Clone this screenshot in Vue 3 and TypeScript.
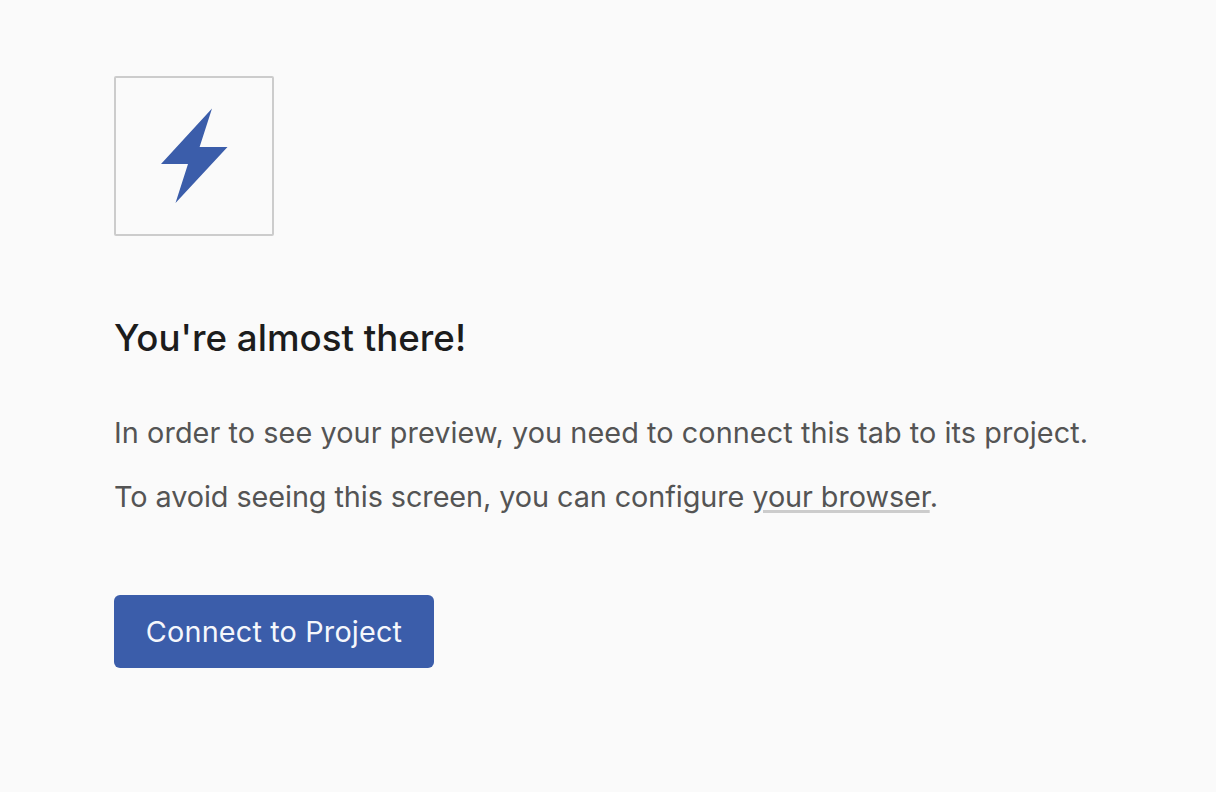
<script setup lang="ts">
const title: string = "You're almost there!";
</script>

<template>
  <main class="page">
    <div class="logo">
      <svg width="156" height="156" viewBox="0 0 156 156" aria-hidden="true">
        <path d="M96 30.5 L83.6 69 H111.5 L59.5 125 L72 86 H45 Z" fill="#3b5daa" />
      </svg>
    </div>
    <h1 class="title">{{ title }}</h1>
    <p class="text first">In order to see your preview, you need to connect this tab to its project.</p>
    <p class="text second">To avoid seeing this screen, you can configure <a class="link" href="#">your browser</a>.</p>
    <button class="cta" type="button">Connect to Project</button>
  </main>
</template>

<style>
html, body { margin: 0; background: #fafafa; }
</style>

<style scoped>
.page {
  box-sizing: border-box;
  min-height: 792px;
  padding: 76px 0 0 114px;
  display: flex;
  flex-direction: column;
  align-items: flex-start;
  font-family: Inter, "Liberation Sans", sans-serif;
  background: #fafafa;
}
.logo {
  width: 160px;
  height: 160px;
  box-sizing: border-box;
  border: 2px solid #cccccc;
  border-radius: 2px;
  display: block;
}
.logo svg { display: block; }
.title {
  margin: 80px 0 0;
  font-size: 36.7px;
  line-height: 44px;
  font-weight: 500;
  color: #1c1c1c;
}
.text {
  margin: 0;
  font-size: 28.8px;
  line-height: 40px;
  font-weight: 400;
  color: #545454;
}
.first { margin-top: 53px; letter-spacing: 0.08px; }
.second { margin-top: 24px; letter-spacing: -0.07px; }
.link {
  color: inherit;
  text-decoration: underline #cccccc 3px;
  text-underline-offset: 3px;
}
.cta {
  margin-top: 78px;
  width: 320px;
  height: 73px;
  border: 0;
  border-radius: 6px;
  background: #3b5daa;
  color: #f5f7fc;
  font-family: inherit;
  font-size: 28.8px;
  font-weight: 400;
  letter-spacing: 0.17px;
  padding: 0;
}
</style>
